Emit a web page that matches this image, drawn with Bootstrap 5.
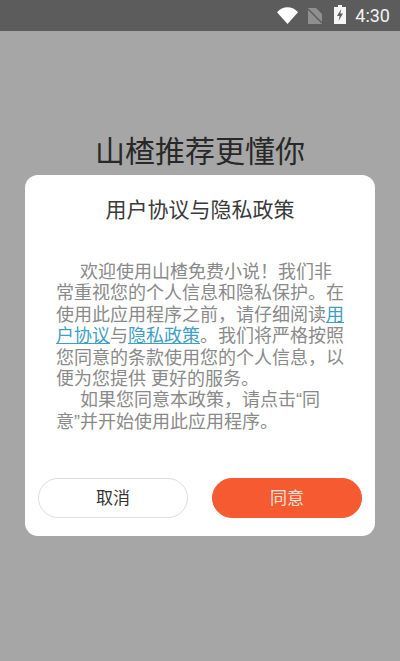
<!DOCTYPE html>
<html lang="zh-CN">
<head>
<meta charset="utf-8">
<title>用户协议与隐私政策</title>
<link href="https://cdn.jsdelivr.net/npm/bootstrap@5.3.0/dist/css/bootstrap.min.css" rel="stylesheet">
<style>
html,body{height:100%}
body{background:#a6a6a6;font-family:"Liberation Sans","Noto Sans CJK SC",sans-serif;overflow:hidden}
.sbar{height:31px;background:#5c5c5c;padding-right:10px}
.sbar-time{font-family:Roboto,sans-serif;font-size:18px;color:#f2f2f2;line-height:31px;margin-left:9px}
.ic-wifi{width:21px;height:17px;margin-right:10px}
.ic-sim{width:14px;height:16px;margin-right:12px}
.ic-bat{width:12px;height:19px;margin-top:-3px}
.apptitle{font-size:30px;line-height:36px;color:#282828;margin-top:103px;margin-bottom:5px}
.dlg{width:350px;height:361px;margin:0 auto;border:0;border-radius:13px;background:#fff}
.dlg-h{font-size:21px;line-height:28px;color:#3a3a3a;margin-top:21px}
.dlg-b{font-size:18px;line-height:21.4px;color:#8a8a8a;margin:38px 31px 0;height:190px}
.dlg-b p{margin:0;text-indent:24px}
.dlg-b a{color:#3f9fc4}
.dlg-f{padding:0 13px 18px}
.bt{width:150px;height:40px;border-radius:20px;font-size:17px;line-height:1;padding:0}
.bt-no{background:#fff;border:1px solid #dedede;color:#333}
.bt-yes{background:#f55a30;border:1px solid #f55a30;color:#fbe3da}
</style>
</head>
<body>
<div class="sbar d-flex justify-content-end align-items-center">
<svg class="ic-wifi" viewBox="0 0 21 17"><path d="M0 5.200C3 2 6.600.2 10.500.2S18 2 21 5.200L10.500 17z" fill="#fff"/></svg>
<svg class="ic-sim" viewBox="0 0 14 16"><path d="M0 0h8l6 6v10H0z" fill="#8f8f8f"/><path d="M0 1l14 14" stroke="#5c5c5c" stroke-width="1.500"/></svg>
<svg class="ic-bat" viewBox="0 0 12 19"><path d="M4 0h4v2h4v17H0V2h4z" fill="#f5f5f5"/><path d="M7.200 4L3 11h2.600L4.600 16 9 8.500H6.300z" fill="#5c5c5c"/></svg>
<span class="sbar-time">4:30</span>
</div>
<h1 class="apptitle text-center fw-normal">山楂推荐更懂你</h1>
<div class="card dlg">
<div class="dlg-h text-center">用户协议与隐私政策</div>
<div class="dlg-b">
<p>欢迎使用山楂免费小说&#xFF01;我们非常重视您的个人信息和隐私保护。在使用此应用程序之前&#xFF0C;请仔细阅读<a href="#">用户协议</a>与<a href="#">隐私政策</a>。我们将严格按照您同意的条款使用您的个人信息&#xFF0C;以便为您提供 更好的服务。</p>
<p>如果您同意本政策&#xFF0C;请点击“同<br>意”并开始使用此应用程序。</p>
</div>
<div class="dlg-f d-flex justify-content-between mt-auto">
<button type="button" class="btn bt bt-no">取消</button>
<button type="button" class="btn bt bt-yes">同意</button>
</div>
</div>
<script src="https://cdn.jsdelivr.net/npm/bootstrap@5.3.0/dist/js/bootstrap.bundle.min.js"></script>
</body>
</html>
